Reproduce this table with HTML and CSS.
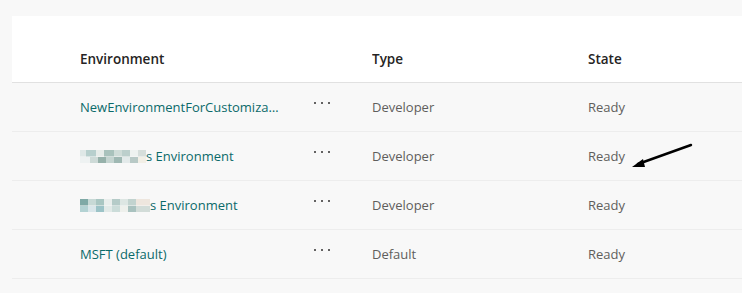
FILE: index.html
```html
<!DOCTYPE html>
<html lang="en">
<head>
    <meta charset="UTF-8">
    <title>Environments</title>
    <link rel="stylesheet" href="styles.css">
</head>
<body>
    <div class="list">
        <div class="row header">
            <div class="cell">Environment</div>
            <div class="cell"></div>
            <div class="cell">Type</div>
            <div class="cell">State</div>
        </div>
        <div class="row">
            <div class="cell name">NewEnvironmentForCustomizations</div>
            <div class="more"><span class="dots"><i></i><i></i><i></i></span></div>
            <div class="cell">Developer</div>
            <div class="cell">Ready</div>
        </div>
        <div class="row">
            <div class="cell name"><span class="blur blur-a"></span>s Environment</div>
            <div class="more"><span class="dots"><i></i><i></i><i></i></span></div>
            <div class="cell">Developer</div>
            <div class="cell state">Ready
                <svg class="arrow" width="64" height="30" viewBox="0 0 64 30">
                    <path d="M61 3 L8 22" stroke="#000" stroke-width="2.4" stroke-linecap="round" fill="none"/>
                    <path d="M2 25 L13 17 L15 25 Z" fill="#000"/>
                </svg>
            </div>
        </div>
        <div class="row">
            <div class="cell name"><span class="blur blur-b"></span>s Environment</div>
            <div class="more"><span class="dots"><i></i><i></i><i></i></span></div>
            <div class="cell">Developer</div>
            <div class="cell">Ready</div>
        </div>
        <div class="row">
            <div class="cell name">MSFT (default)</div>
            <div class="more"><span class="dots"><i></i><i></i><i></i></span></div>
            <div class="cell">Default</div>
            <div class="cell">Ready</div>
        </div>
    </div>
</body>
</html>
```

FILE: styles.css
```css
body {
    margin: 0;
    background: #f8f8f8;
    font-family: "Open Sans", "Noto Sans", sans-serif;
    font-size: 13px;
    color: #605e5c;
}
.list {
    margin: 16px 0 0 12px;
}
.row {
    display: grid;
    grid-template-columns: 205px 87px 216px 1fr;
    align-items: center;
    height: 48px;
    padding-left: 68px;
    border-bottom: 1px solid #ededed;
}
.header {
    height: 66px;
    background: #fff;
    border-bottom: 1px solid #e1e1e1;
    color: #252423;
    font-weight: 600;
    font-size: 13.5px;
}
.header .cell {
    padding-top: 19px;
}
.cell {
    white-space: nowrap;
    overflow: hidden;
    text-overflow: ellipsis;
}
.name {
    color: #0b6a6a;
    max-width: 201px;
}
.more {
    padding-left: 29px;
}
.dots {
    display: flex;
    gap: 5px;
    margin-top: -5px;
}
.dots i {
    width: 2px;
    height: 2px;
    background: #323130;
    border-radius: 1px;
}
.blur {
    display: inline-block;
    vertical-align: -2px;
    height: 13px;
    background-size: 100% 50%;
    background-repeat: no-repeat;
}
.blur-a {
    width: 66px;
    background-image:
        linear-gradient(90deg, #dfe8e7 0 6px, #b7cfcd 6px 16px, #e6ece9 16px 24px, #a9c2bc 24px 34px, #cfdcd8 34px 42px, #bccfcc 42px 50px, #eef2f0 50px 58px, #d6dedb 58px),
        linear-gradient(90deg, #eef2f2 0 10px, #cddad7 10px 18px, #96b1aa 18px 26px, #c4d4d0 26px 34px, #9fb8b3 34px 42px, #e3eaea 42px 50px, #b8c9c6 50px 58px, #f2efe6 58px);
    background-position: 0 0, 0 100%;
}
.blur-b {
    width: 70px;
    background-image:
        linear-gradient(90deg, #7fa9a6 0 8px, #c7d9d6 8px 16px, #a9c6c2 16px 24px, #e9eeec 24px 32px, #b5cbc8 32px 40px, #dde6e3 40px 48px, #c2d3cf 48px 56px, #eee6de 56px),
        linear-gradient(90deg, #b3d2d3 0 8px, #d9e6ea 8px 16px, #9cc3c7 16px 24px, #e2eae8 24px 32px, #cbdcd9 32px 40px, #eef0ec 40px 48px, #a9c2bf 48px 56px, #d2dcd8 56px);
    background-position: 0 0, 0 100%;
}
.state {
    position: relative;
    overflow: visible;
}
.arrow {
    position: absolute;
    left: 42px;
    top: -5px;
}
```
